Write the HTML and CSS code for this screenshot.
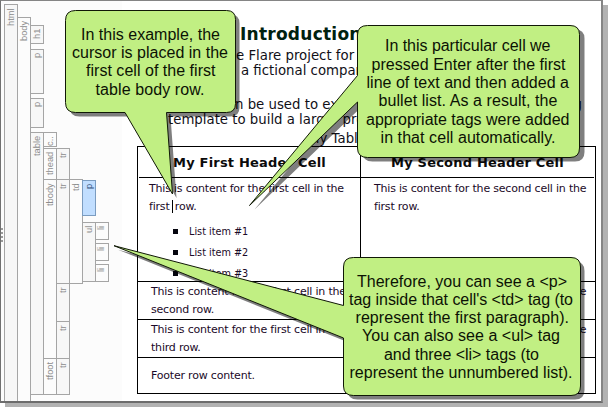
FILE: index.html
```
<!DOCTYPE html>
<html lang="en">
<head>
<meta charset="utf-8">
<title>Table structure</title>
<link rel="stylesheet" href="styles.css">
</head>
<body>
<div class="window">
  <aside class="tree">
    <div class="node fill"><span class="tag">html</span><div class="kids from-body">
      <div class="node fill"><span class="tag light">body</span><div class="kids from-h1">
        <div class="node h1"><span class="tag">h1</span></div>
        <div class="node p1"><span class="tag">p</span></div>
        <div class="node p2"><span class="tag">p</span></div>
        <div class="node table"><span class="tag">table</span><div class="kids">
          <div class="node caption"><span class="tag light">c..</span></div>
          <div class="node thead"><span class="tag light">thead</span><div class="kids"><div class="node fill"><span class="tag">tr</span></div></div></div>
          <div class="node tbody"><span class="tag light">tbody</span><div class="kids">
            <div class="node tr1"><span class="tag">tr</span><div class="kids">
              <div class="node fill"><span class="tag light">td</span><div class="kids from-p">
                <div class="node cellp"><span class="tag current">p</span></div>
                <div class="node ul"><span class="tag">ul</span><div class="kids items">
                  <div class="node li"><span class="tag light">li</span></div>
                  <div class="node li"><span class="tag light">li</span></div>
                  <div class="node li"><span class="tag light">li</span></div>
                </div></div>
              </div></div>
            </div></div>
            <div class="node tr2"><span class="tag">tr</span></div>
            <div class="node tr3"><span class="tag">tr</span></div>
          </div></div>
          <div class="node tfoot"><span class="tag light">tfoot</span><div class="kids"><div class="node fill"><span class="tag">tr</span></div></div></div>
        </div></div>
      </div></div>
    </div></div>
    <i class="grip"></i>
  </aside>
  <main class="page">
    <h1>Introduction</h1>
    <p class="l1">e Flare project for</p>
    <p class="l2">a fictional company</p>
    <p class="l3"><span>n be used to ex</span><span>g</span></p>
    <p class="l4">template to build a larger project</p>
    <p class="title">My Table</p>
    <div class="grid">
      <div class="row head"><div>My First Header Cell</div><div>My Second Header Cell</div></div>
      <div class="row first">
        <div>This is content for the first cell in the<br>first<i class="cursor"></i> row.
          <ul><li>List item #1</li><li>List item #2</li><li>List item #3</li></ul>
        </div>
        <div>This is content for the second cell in the<br>first row.</div>
      </div>
      <div class="row"><div>This is content for the first cell in the<br>second row.</div><div>This is content for the second cell in the</div></div>
      <div class="row"><div>This is content for the first cell in the<br>third row.</div><div>This is content for the second cell in the</div></div>
      <div class="row foot"><div>Footer row content.</div><div></div></div>
    </div>
  </main>
</div>
<svg class="callouts" width="608" height="407" viewBox="0 0 608 407">
  <defs>
    <path id="c1" d="M75.500 10.500H226.500Q235.500 10.500 235.500 19.500V103.500Q235.500 112.500 226.500 112.500H166.500L172.500 194L125 112.500H75.500Q65.500 112.500 65.500 102.500V20.500Q65.500 10.500 75.500 10.500Z"/>
    <path id="c2" d="M367.500 25.500H570Q579.500 25.500 579.500 34.500V148Q579.500 157.500 570 157.500H367.500Q357.500 157.500 357.500 148V102L249.500 205.500L357.500 75.500V35Q357.500 25.500 367.500 25.500Z"/>
    <path id="c3" d="M353.500 257.500H571Q580.500 257.500 580.500 267V386Q580.500 395.500 571 395.500H353.500Q343.500 395.500 343.500 386V338L114 245.700L343.500 305.500V267Q343.500 257.500 353.500 257.500Z"/>
  </defs>
  <g><use href="#c1" class="shade" x="4" y="4"/><use href="#c1" class="bubble"/></g>
  <g><use href="#c2" class="shade" x="5" y="4"/><use href="#c2" class="bubble"/></g>
  <g><use href="#c3" class="shade" x="4" y="4"/><use href="#c3" class="bubble"/></g>
  <g class="note">
    <text x="81" y="40" textLength="139">In this example, the</text>
    <text x="72" y="58" textLength="156">cursor is placed in the</text>
    <text x="86" y="76" textLength="129.500">first cell of the first</text>
    <text x="95.500" y="94.500" textLength="109">table body row.</text>
    <text x="385" y="51" textLength="165.500">In this particular cell we</text>
    <text x="371.500" y="69.500" textLength="194">pressed Enter after the first</text>
    <text x="366.500" y="87.500" textLength="202.500">line of text and then added a</text>
    <text x="378.500" y="105.500" textLength="179">bullet list. As a result, the</text>
    <text x="366" y="124.500" textLength="203.500">appropriate tags were added</text>
    <text x="380.500" y="142.500" textLength="175">in that cell automatically.</text>
    <text x="357" y="286.500" textLength="210">Therefore, you can see a &lt;p&gt;</text>
    <text x="349" y="305" textLength="224">tag inside that cell's &lt;td&gt; tag (to</text>
    <text x="355.500" y="323" textLength="213.500">represent the first paragraph).</text>
    <text x="362" y="341" textLength="198">You can also see a &lt;ul&gt; tag</text>
    <text x="384" y="359.500" textLength="155">and three &lt;li&gt; tags (to</text>
    <text x="349.500" y="377.500" textLength="223">represent the unnumbered list).</text>
  </g>
</svg>
</body>
</html>
```
FILE: styles.css
```
* { box-sizing: border-box; }
body {
  margin: 0;
  width: 608px;
  height: 407px;
  overflow: hidden;
  position: relative;
  background: #fff;
  font-family: "DejaVu Sans", Verdana, sans-serif;
  color: #101010;
}
.window {
  display: flex;
  width: 603px;
  height: 403px;
  border: 1px solid #777;
  border-width: 1px 2px 2px 1px;
  border-color: #858585 #858585 #6c6c6c #707070;
  background: #fff;
  box-shadow: 5px 5px 0 #b2b2b2;
  overflow: hidden;
}

/* structure bars */
.tree {
  position: relative;
  width: 121px;
  flex: none;
  height: 400px;
  padding: 3px 0 0 3px;
  background: #fcfcfc;
  overflow: hidden;
}
.node { display: flex; flex: none; }
.fill { height: 100%; }
.tree > .fill { height: 410px; }
.kids { display: flex; flex-direction: column; }
.tag {
  width: 14px;
  margin-left: -1px;
  height: calc(100% + 1px);
  flex: none;
  border: 1px solid #a5a5a5;
  background: #f7f7f7;
  color: #8c8c8c;
  font: 9.300px/12px "Liberation Sans", Arial, sans-serif;
  writing-mode: vertical-rl;
  transform: rotate(180deg);
  text-align: end;
  padding-bottom: 3px;
  white-space: nowrap;
}
.tree > .node > .tag { margin-left: 0; }
.light { background: #fcfcfc; }
.current { background: #c1deff; border-color: #7b9cc0; color: #34537d; }
.from-body { padding-top: 13px; }
.from-h1 { padding-top: 8px; }
.h1 { height: 18px; margin-bottom: 6px; }
.p1 { height: 44px; margin-bottom: 5px; }
.p2 { height: 29px; margin-bottom: 5px; }
.table { height: 262px; }
.caption { height: 14px; margin-bottom: 2px; }
.thead { height: 31px; }
.tbody { height: 179px; }
.tr1 { height: 104px; }
.tr2 { height: 38px; }
.tr3 { height: 37px; }
.tfoot { height: 36px; }
.from-p { padding-top: 1px; }
.cellp { height: 35px; margin-bottom: 7px; }
.ul { height: 59px; }
.items { gap: 4px; }
.li { height: 17px; }
.li .tag { line-height: 11px; }
.grip {
  position: absolute;
  left: 0;
  top: 227px;
  width: 2px;
  height: 14px;
  background: repeating-linear-gradient(#999 0 2px, transparent 2px 4px);
}

/* document */
.page { flex: none; width: 478px; padding: 22px 0 0 15px; }
h1, p { margin: 0; white-space: nowrap; }
h1 {
  padding-left: 103px;
  font-size: 17px;
  line-height: 22px;
  letter-spacing: 0.25px;
  color: #00210f;
}
p { font-size: 13.300px; line-height: 15px; color: #111018; }
.l1 { padding: 3px 0 0 99px; }
.l2 { padding-left: 104px; }
.l3 { display: flex; justify-content: space-between; width: 445px; padding: 19px 0 0 98px; }
.l4 { padding-left: 31px; }
.title { padding: 4px 0 0 171px; }
.grid {
  width: 459px;
  border: 1px solid #000;
  font-size: 11px;
  line-height: 18px;
  letter-spacing: -0.2px;
  color: #1b0a28;
  white-space: nowrap;
}
.row { display: grid; grid-template-columns: 222px 1fr; height: 38px; border-bottom: 1px solid #000; }
.row > div { padding: 1px 0 0 13px; }
.row > div + div { border-left: 1px solid #000; }
.head { height: 31px; margin: 0 1px; grid-template-columns: 221px 1fr; }
.head > div {
  padding: 0;
  text-align: center;
  font-size: 13px;
  font-weight: bold;
  line-height: 32px;
  letter-spacing: 0.2px;
  color: #0b0b0b;
}
.first { height: 104px; }
.first > div { padding: 2px 0 0 11px; }
.first > div + div { padding-left: 13px; }
.foot { height: 35px; border: 0; }
.foot > div { padding-top: 9px; }
.cursor {
  display: inline-block;
  width: 1px;
  height: 13px;
  margin: 0 -1px 0 2px;
  vertical-align: -3px;
  background: #000;
}
ul { list-style: none; margin: 5px 0 0; padding: 0 0 0 24px; }
li { display: flex; align-items: center; gap: 11px; height: 21px; font-size: 9.700px; letter-spacing: 0; }
li::before { content: ""; width: 5px; height: 5px; background: #05050f; }

/* callouts */
.callouts { position: absolute; left: 0; top: 0; }
.bubble { fill: #c1ef83; stroke: #101806; stroke-width: 1; }
.shade { fill: #000; fill-opacity: 0.5; }
.note { font: 16px "Liberation Sans", Arial, sans-serif; fill: #0c1204; }
```
